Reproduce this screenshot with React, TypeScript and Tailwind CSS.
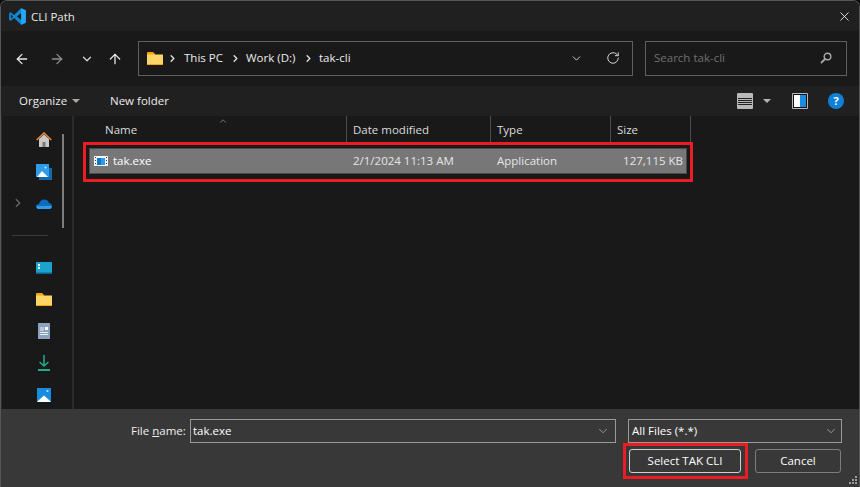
import { ArrowLeft, ArrowRight, ArrowUp, ChevronDown, ChevronRight, RotateCw, X } from "lucide-react";

const COLUMNS = [
  { label: "Date modified", width: "w-[144px]" },
  { label: "Type", width: "w-[120px]" },
  { label: "Size", width: "w-[80px]" },
];

function VsCodeLogo() {
  return (
    <svg width="17" height="17" viewBox="0 0 100 100">
      <path d="M71 99 L30 59 L10 75 L1 70 V30 L10 25 L30 41 L71 1 L99 13 V87 Z" fill="#0f86d4" />
      <path d="M71 1 L99 13 V87 L71 99 L71 72 L46 50 L71 28 Z" fill="#27a5f5" />
      <path d="M12 37 L24 50 L12 63 Z" fill="#1d1d1d" />
      <path d="M71 30 V70 L46 50 Z" fill="#1d1d1d" />
    </svg>
  );
}

function FolderIcon({ w = 16, h = 13 }: { w?: number; h?: number }) {
  return (
    <svg width={w} height={h} viewBox="0 0 16 13">
      <path d="M0 1 Q0 0 1 0 H6 L8 2 V4 H0 Z" fill="#f0a80c" />
      <path d="M0 2.500 H16 V12 Q16 13 15 13 H1 Q0 13 0 12 Z" fill="#fcd467" />
      <rect x="0" y="12" width="16" height="1" fill="#eea90f" />
    </svg>
  );
}

function ExeIcon() {
  return (
    <svg width="14" height="10" viewBox="0 0 14 10">
      <rect width="14" height="10" fill="#f4f4f4" />
      <rect x="3" y="2" width="8" height="7" fill="#0f76c6" />
      <rect x="7" y="2" width="4" height="7" fill="#2f9bea" />
      <rect x="1" y="1" width="1" height="1" fill="#333" />
      <rect x="1" y="4" width="1" height="1" fill="#333" />
      <rect x="1" y="7" width="1" height="1" fill="#333" />
      <rect x="12" y="1" width="1" height="1" fill="#333" />
      <rect x="12" y="4" width="1" height="1" fill="#333" />
      <rect x="12" y="7" width="1" height="1" fill="#333" />
    </svg>
  );
}

function NavIcon({ name }: { name: string }) {
  if (name === "home")
    return (
      <svg width="16" height="16" viewBox="0 0 16 16">
        <path d="M3 7 L8 2.500 L13 7 V15 H3 Z" fill="#c9c9c9" />
        <rect x="6.500" y="10" width="3" height="5" fill="#7c7c7c" />
        <path d="M0.700 8 L8 1 L15.300 8" fill="none" stroke="#e8873a" strokeWidth="1.600" />
      </svg>
    );
  if (name === "gallery")
    return (
      <svg width="16" height="16" viewBox="0 0 16 16">
        <rect x="3" y="4" width="13" height="12" fill="#1469ad" />
        <rect x="0" y="0" width="13" height="13" fill="#2f9bea" />
        <path d="M1 13 L6 7 L12 13 Z" fill="#fff" />
        <circle cx="9.500" cy="3.500" r="1" fill="#cfe8fb" />
      </svg>
    );
  if (name === "cloud")
    return (
      <svg width="16" height="10" viewBox="0 0 16 10">
        <path d="M3 10 Q0 10 0 7.500 Q0 5 3 5 Q4 0.500 8.500 0.500 Q12 0.500 13 4 Q16 4.500 16 7.500 Q16 10 13 10 Z" fill="#0f6cbd" />
        <path d="M2 10 Q0 9 1 7 H15.500 Q16 10 13 10 Z" fill="#2f9bea" />
      </svg>
    );
  if (name === "desktop")
    return (
      <svg width="16" height="12" viewBox="0 0 16 12">
        <rect width="16" height="11.500" rx="0.500" fill="#1aa3cf" />
        <rect y="10.500" width="16" height="1" fill="#0f6394" />
        <rect x="2" y="2" width="2" height="2" fill="#fff" />
        <rect x="2" y="5" width="2" height="2" fill="#fff" />
      </svg>
    );
  if (name === "docs")
    return (
      <svg width="12" height="16" viewBox="0 0 12 16">
        <rect width="12" height="16" rx="0.500" fill="#8ca3bd" />
        <rect x="7" y="4" width="3" height="3" fill="#fff" />
        <path d="M2 5 H6 M2 7 H6 M2 9.500 H10 M2 11.500 H10" stroke="#fff" strokeWidth="0.800" />
      </svg>
    );
  if (name === "down")
    return (
      <svg width="12" height="16" viewBox="0 0 12 16">
        <path d="M6 0 V11 M1.500 7 L6 11 L10.500 7" fill="none" stroke="#1fae8a" strokeWidth="1.500" />
        <rect x="0" y="14" width="12" height="2" fill="#1fae8a" />
      </svg>
    );
  return (
    <svg width="14" height="14" viewBox="0 0 14 14">
      <rect width="14" height="14" fill="#1a8ce0" />
      <path d="M0 14 L3 11 L7 7.500 L11 11 L14 14 Z" fill="#fff" />
      <circle cx="10.500" cy="3" r="1" fill="#cfe8fb" />
    </svg>
  );
}

function ViewIcons() {
  return (
    <div className="flex items-center">
      <div className="w-4 h-4 rounded-[1px] bg-[#b9b9b9] flex flex-col justify-center gap-[1px] px-[1px]">
        <div className="h-[1px] bg-[#222]" />
        <div className="h-[1px] bg-[#222]" />
        <div className="h-[1px] bg-[#222]" />
        <div className="h-[1px] bg-[#222]" />
      </div>
      <div className="ml-[10px] w-0 h-0 border-x-[4px] border-x-transparent border-t-[4px] border-t-[#b5b5b5]" />
      <div className="ml-[21px] w-4 h-4 rounded-[1px] bg-[#b9b9b9] p-[1px]">
        <div className="flex h-full border border-[#111]">
          <div className="flex-1 bg-white" />
          <div className="flex-1 bg-[#1d8ce0]" />
        </div>
      </div>
      <div className="ml-[20px] w-4 h-4 rounded-full bg-[#0f80d8] text-white text-[11px] font-bold leading-4 text-center">?</div>
    </div>
  );
}

export default function App() {
  return (
    <div className="w-[860px] h-[487px] overflow-hidden bg-[#0d0d0d] text-[11.5px] whitespace-nowrap text-[#ececec] font-['Open_Sans',sans-serif]">
      <div className="h-full flex flex-col rounded-t-[7px] border-t border-x border-[#565656] overflow-hidden">
        <div className="h-[30px] shrink-0 bg-[#202020] flex items-center pl-[8px] pr-[7px]">
          <VsCodeLogo />
          <span className="ml-[5px] pt-[1px] text-[#e8e8e8]">CLI Path</span>
          <X size={15} strokeWidth={1.3} className="ml-auto text-white" />
        </div>

        <div className="h-[55px] shrink-0 bg-[#191919] flex items-center pl-[13px] pr-[12px]">
          <ArrowLeft size={16} strokeWidth={1.9} className="text-[#e8e8e8]" />
          <ArrowRight size={16} strokeWidth={1.9} className="ml-[19px] text-[#8f8f8f]" />
          <ChevronDown size={14} strokeWidth={2.2} className="ml-[15px] text-[#d4d4d4]" />
          <ArrowUp size={16} strokeWidth={1.9} className="ml-[13px] text-[#e8e8e8]" />
          <div className="ml-[15px] w-[495px] h-[35px] border border-[#5f5f5f] flex items-center pl-[8px] pr-[12px] pb-[1px]">
            <FolderIcon />
            <ChevronRight size={11} strokeWidth={3} className="ml-[4px] text-[#e0e0e0]" />
            <span className="ml-[6px] w-[43px]">This PC</span>
            <ChevronRight size={11} strokeWidth={3} className="ml-[3px] text-[#e0e0e0]" />
            <span className="ml-[5px] w-[54px]">Work (D:)</span>
            <ChevronRight size={11} strokeWidth={3} className="ml-[3px] text-[#e0e0e0]" />
            <span className="ml-[5px]">tak-cli</span>
            <ChevronDown size={13} strokeWidth={1.8} className="ml-auto text-[#d4d4d4]" />
            <RotateCw size={14} strokeWidth={1.7} className="ml-[23px] text-[#d4d4d4]" />
          </div>
          <div className="ml-[12px] w-[202px] h-[35px] border border-[#5f5f5f] flex items-center pl-[8px] pr-[14px] pb-[1px] text-[#6f6f6f]">
            <span>Search tak-cli</span>
            <svg width="12" height="12" viewBox="0 0 12 12" className="ml-auto">
              <circle cx="7.500" cy="4.500" r="3.300" fill="none" stroke="#a8a8a8" strokeWidth="1.400" />
              <path d="M5 7 L1 11" stroke="#a8a8a8" strokeWidth="1.800" />
            </svg>
          </div>
        </div>

        <div className="h-[30px] shrink-0 bg-[#202020] flex items-center pl-[18px] pr-[15px]">
          <span className="w-[48px]">Organize</span>
          <div className="ml-[5px] w-0 h-0 border-x-[4px] border-x-transparent border-t-[4px] border-t-[#a8a8a8]" />
          <span className="ml-[30px]">New folder</span>
          <div className="ml-auto">
            <ViewIcons />
          </div>
        </div>

        <div className="flex-1 min-h-0 flex bg-[#191919]">
          <div className="w-[71px] shrink-0 relative flex flex-col items-center pl-[13px] border-l border-[#2a2a2a] overflow-hidden">
            <div className="absolute left-[60px] top-[18px] w-[2px] h-[94px] bg-[#7d7d7d]" />
            <ChevronRight size={14} strokeWidth={2} className="absolute left-[9px] top-[80px] text-[#6a6a6a]" />
            <div className="absolute left-[10px] top-[119px] w-[36px] h-[1px] bg-[#3a3a3a]" />
            <div className="h-[16px] mt-[16px]"><NavIcon name="home" /></div>
            <div className="h-[16px] mt-[16px]"><NavIcon name="gallery" /></div>
            <div className="h-[16px] mt-[16px] flex items-center"><NavIcon name="cloud" /></div>
            <div className="h-[16px] mt-[48px] flex items-center"><NavIcon name="desktop" /></div>
            <div className="h-[16px] mt-[15px] flex items-center"><FolderIcon /></div>
            <div className="h-[16px] mt-[16px]"><NavIcon name="docs" /></div>
            <div className="h-[16px] mt-[16px]"><NavIcon name="down" /></div>
            <div className="h-[16px] mt-[16px] flex items-center"><NavIcon name="pics" /></div>
          </div>
          <div className="w-[2px] shrink-0 bg-[#2b2b2b]" />

          <div className="flex-1 min-w-0 relative">
            <div className="flex h-[27px] items-center text-[#dcdcdc]">
              <div className="w-[273px] h-full shrink-0 pl-[31px] flex items-center border-r border-[#4d4d4d] relative">
                Name
                <ChevronDown size={10} strokeWidth={1.5} className="absolute left-[144px] top-0 rotate-180 text-[#b0b0b0]" />
              </div>
              {COLUMNS.map((c) => (
                <div key={c.label} className={`${c.width} h-full shrink-0 pl-[6px] flex items-center border-r border-[#4d4d4d]`}>
                  {c.label}
                </div>
              ))}
            </div>

            <div className="ml-[15px] mt-[5px] w-[598px] h-[26px] bg-[#777777] border border-[#4a4a4a] flex items-center text-[#e6e6e6]">
              <div className="w-[263px] shrink-0 flex items-center pl-[4px]">
                <ExeIcon />
                <span className="ml-[5px] text-white">tak.exe</span>
              </div>
              <div className="w-[144px] shrink-0">2/1/2024 11:13 AM</div>
              <div className="w-[104px] shrink-0">Application</div>
              <div className="flex-1 text-right pr-[3px]">127,115 KB</div>
            </div>

            <div className="absolute left-[9px] top-[26px] w-[610px] h-[40px] border-[3px] border-[#ed1c24]" />
          </div>
        </div>

        <div className="h-[78px] shrink-0 bg-[#383838] relative pt-[10px] pr-[17px]">
          <div className="flex items-center h-[24px]">
            <span className="ml-[130px] w-[54px] text-[#f0f0f0]">
              File <span className="underline">n</span>ame:
            </span>
            <div className="ml-[5px] w-[426px] h-[24px] border border-[#9a9a9a] flex items-center pl-[2px] pr-[5px] text-white">
              tak.exe
              <ChevronDown size={14} strokeWidth={1.3} className="ml-auto text-[#b8b8b8]" />
            </div>
            <div className="ml-[12px] w-[214px] h-[24px] border border-[#9a9a9a] flex items-center pl-[3px] pr-[3px] text-white">
              All Files (*.*)
              <ChevronDown size={14} strokeWidth={1.3} className="ml-auto text-[#b8b8b8]" />
            </div>
          </div>
          <div className="flex justify-end mt-[6px] mr-[1px]">
            <button type="button" className="w-[112px] h-[24px] rounded-[3px] border border-[#cfcfcf] text-white">Select TAK CLI</button>
            <button type="button" className="ml-[14px] w-[86px] h-[24px] rounded-[3px] border border-[#7d7d7d] text-white">Cancel</button>
          </div>
          <div className="absolute left-[622px] top-[34px] w-[125px] h-[36px] border-[3px] border-[#ed1c24]" />
          <svg width="10" height="10" viewBox="0 0 10 10" className="absolute right-[1px] bottom-[2px]">
            <path d="M7 1 H9 V3 H7 Z M4 4 H6 V6 H4 Z M7 4 H9 V6 H7 Z M1 7 H3 V9 H1 Z M4 7 H6 V9 H4 Z M7 7 H9 V9 H7 Z" fill="#9a9a9a" />
          </svg>
        </div>
      </div>
    </div>
  );
}
